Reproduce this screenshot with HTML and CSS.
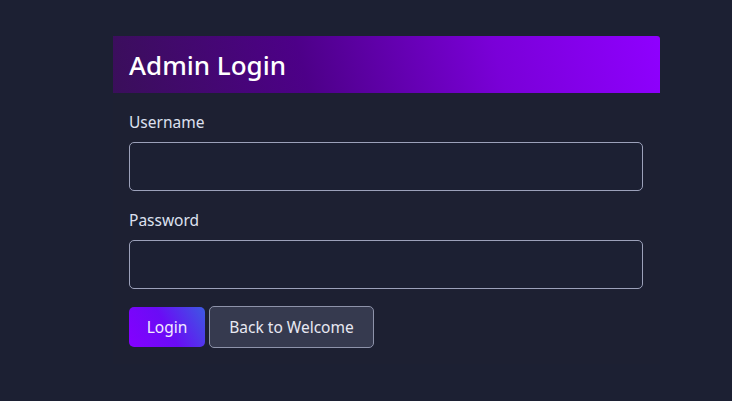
FILE: index.html
```html
<!DOCTYPE html>
<html lang="en">
<head>
<meta charset="utf-8">
<title>Admin Login</title>
<link rel="stylesheet" href="styles.css">
</head>
<body>
<main class="page">
  <section class="card">
    <header class="card-header">
      <h1 class="title">Admin Login</h1>
    </header>
    <form class="card-body">
      <div class="field">
        <label class="label" for="username">Username</label>
        <input class="input" id="username" type="text">
      </div>
      <div class="field">
        <label class="label" for="password">Password</label>
        <input class="input" id="password" type="password">
      </div>
      <div class="actions">
        <button class="btn btn-primary" type="button">Login</button>
        <button class="btn btn-secondary" type="button">Back to Welcome</button>
      </div>
    </form>
  </section>
</main>
</body>
</html>
```
FILE: styles.css
```css
html, body {
  margin: 0;
  padding: 0;
  background: #1c2033;
  font-family: "Noto Sans", "Open Sans", sans-serif;
  color: #e4e6f2;
}
.page {
  padding: 36px 0 0 113px;
}
.card {
  width: 547px;
  background: #1d2032;
}
.card-header {
  height: 57px;
  display: flex;
  align-items: center;
  padding: 0 16px;
  border-top-right-radius: 3px;
  background: linear-gradient(75deg, #3a0f5a 0%, #4d0088 35%, #7a00d8 70%, #8f00ff 100%);
}
.title {
  margin: 0;
  font-size: 26px;
  font-weight: 500;
  color: #ffffff;
}
.card-body {
  padding: 17px 16px 16px 16px;
  display: flex;
  flex-direction: column;
  gap: 17px;
}
.field {
  display: flex;
  flex-direction: column;
  gap: 8px;
}
.label {
  font-size: 15.5px;
  line-height: 24px;
  color: #dde0f0;
}
.input {
  box-sizing: border-box;
  width: 514px;
  height: 49px;
  border: 1px solid #9ca1ba;
  border-radius: 5px;
  background: #1c2033;
  color: #fff;
  font: inherit;
  padding: 0 12px;
}
.actions {
  display: flex;
  align-items: center;
  gap: 4px;
}
.btn {
  font-family: inherit;
  font-size: 15.5px;
  border-radius: 5px;
  cursor: pointer;
}
.btn-primary {
  height: 40px;
  width: 76px;
  padding: 0;
  border: none;
  color: #f2ecff;
  background: linear-gradient(60deg, #8500ff 0%, #6a0cf5 50%, #3c5ae2 100%);
}
.btn-secondary {
  height: 42px;
  width: 165px;
  padding: 0;
  border: 1px solid #8e93aa;
  background: #363a4f;
  color: #e8e8f2;
}
```
